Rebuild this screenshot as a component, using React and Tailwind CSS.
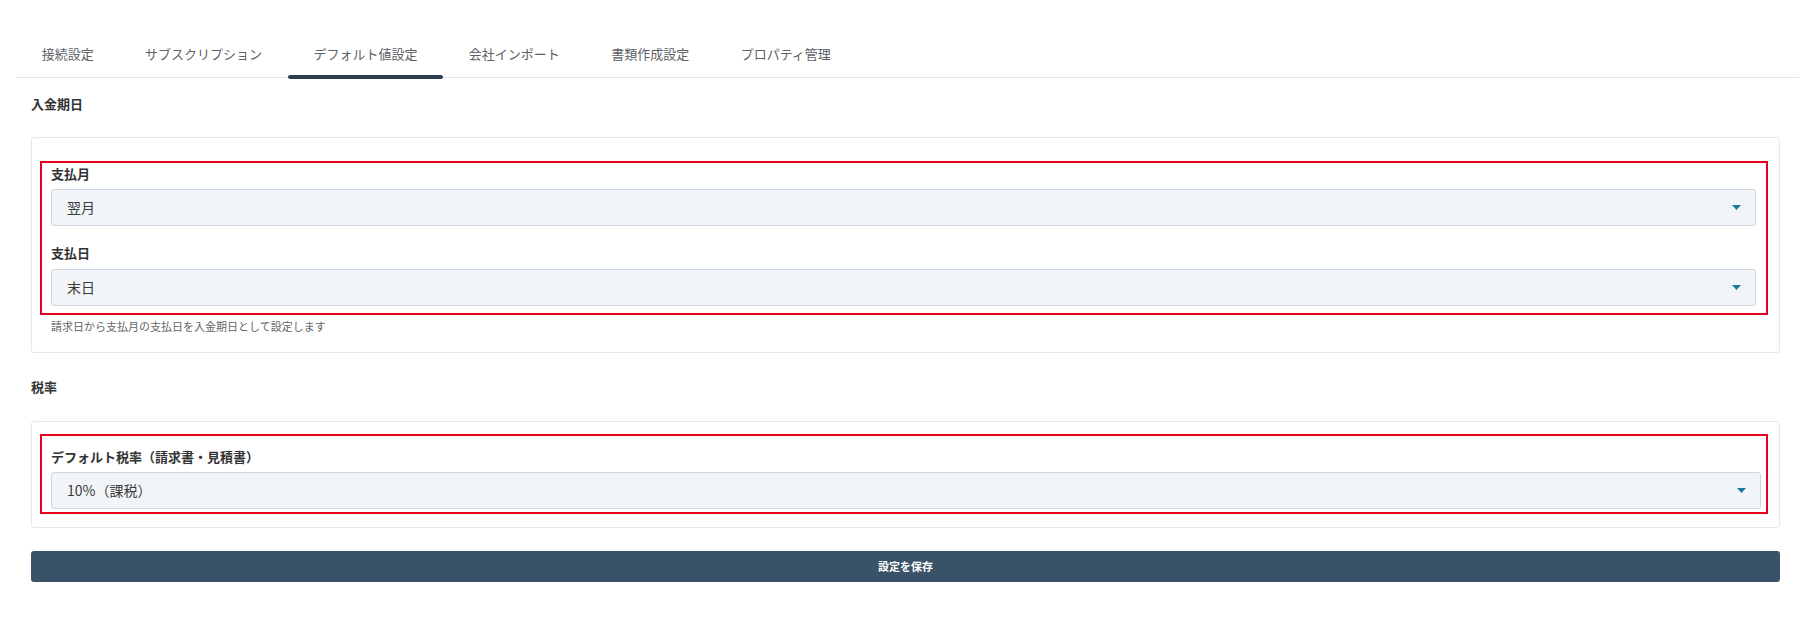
import React, { useState } from 'react'

const tabs = ['接続設定', 'サブスクリプション', 'デフォルト値設定', '会社インポート', '書類作成設定', 'プロパティ管理']

function Select({ value, options, onChange, className = '' }) {
  return (
    <div className={`relative ${className}`}>
      <select
        value={value}
        onChange={(e) => onChange(e.target.value)}
        className="appearance-none w-full h-[37px] pl-[15px] pr-10 bg-[#f2f5f8] border border-[#cdd7e1] rounded-[3px] text-[14px] text-[#3a3a3a] outline-none"
      >
        {options.map((o) => (
          <option key={o} value={o}>{o}</option>
        ))}
      </select>
      <svg className="pointer-events-none absolute right-[15px] top-[16px]" width="9" height="5" viewBox="0 0 9 5">
        <path d="M0 0h9L4.5 5z" fill="#1b7c99" />
      </svg>
    </div>
  )
}

export default function App() {
  const [active, setActive] = useState(2)
  const [month, setMonth] = useState('翌月')
  const [day, setDay] = useState('末日')
  const [tax, setTax] = useState('10%（課税）')

  return (
    <div className="min-h-screen bg-white text-[#333]" style={{ fontFamily: '"Noto Sans CJK JP", "Noto Sans", sans-serif' }}>
      {/* tabs */}
      <div className="ml-[16px] mr-[19px] pt-[31px] border-b border-[#dfe4ea] flex">
        {tabs.map((t, i) => (
          <button
            key={t}
            onClick={() => setActive(i)}
            className="relative h-[46px] px-[25.7px] flex items-center text-[13px] text-[#5c6166]"
          >
            {t}
            {active === i && (
              <span className="absolute left-0 right-0 bottom-[-2px] h-[4px] rounded-full bg-[#2c3e50]" />
            )}
          </button>
        ))}
      </div>

      <div className="ml-[31px] mr-[38px]">
        <h3 className="mt-[17px] text-[13px] leading-[18px] font-bold">入金期日</h3>

        <div className="mt-[24px] border border-[#e3e8ee] rounded-[3px] pt-[23px] pb-[18px] pl-[8px] pr-[11px]">
          <div className="border-2 border-[#e8001c] pt-[2px] pb-[7px] pl-[9px] pr-[10px]">
            <label className="block text-[13px] leading-[18px] font-bold">支払月</label>
            <Select className="mt-[6px]" value={month} onChange={setMonth} options={['当月', '翌月', '翌々月']} />
            <label className="block mt-[18px] text-[13px] leading-[18px] font-bold">支払日</label>
            <Select className="mt-[7px]" value={day} onChange={setDay} options={['末日', '10日', '15日', '20日', '25日']} />
          </div>
          <p className="mt-[3px] ml-[11px] text-[11px] leading-[16px] text-[#666]">請求日から支払月の支払日を入金期日として設定します</p>
        </div>

        <h3 className="mt-[25px] text-[13px] leading-[18px] font-bold">税率</h3>

        <div className="mt-[25px] border border-[#e3e8ee] rounded-[3px] pt-[12px] pb-[13px] pl-[8px] pr-[11px]">
          <div className="border-2 border-[#e8001c] pt-[12px] pb-[3px] pl-[9px] pr-[5px]">
            <label className="block text-[13px] leading-[18px] font-bold">デフォルト税率（請求書・見積書）</label>
            <Select className="mt-[6px]" value={tax} onChange={setTax} options={['10%（課税）', '8%（軽減税率）', '0%（非課税）']} />
          </div>
        </div>

        <button className="mt-[23px] w-full h-[31px] rounded-[3px] bg-[#3a5268] text-white text-[11px] font-bold">
          設定を保存
        </button>
      </div>
    </div>
  )
}
